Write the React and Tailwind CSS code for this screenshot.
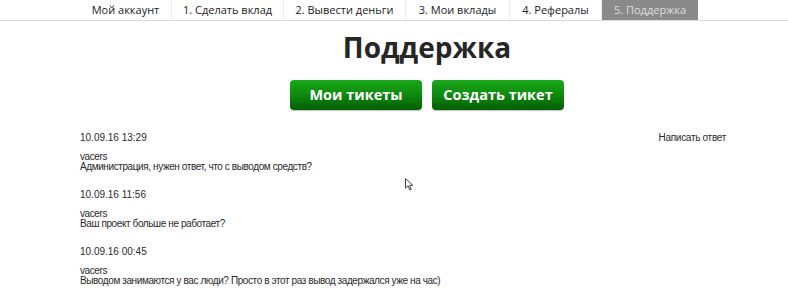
import React from "react";

const tabs = [
  { name: "Мой аккаунт", w: "w-[92px]" },
  { name: "1. Сделать вклад", w: "w-[112px]" },
  { name: "2. Вывести деньги", w: "w-[122px]" },
  { name: "3. Мои вклады", w: "w-[104px]" },
  { name: "4. Рефералы", w: "w-[92px]" },
  { name: "5. Поддержка", w: "w-[96px]", active: true },
];

const messages = [
  { date: "10.09.16 13:29", user: "vacers", text: "Администрация, нужен ответ, что с выводом средств?" },
  { date: "10.09.16 11:56", user: "vacers", text: "Ваш проект больше не работает?" },
  { date: "10.09.16 00:45", user: "vacers", text: "Выводом занимаются у вас люди? Просто в этот раз вывод задержался уже на час)" },
];

export default function App() {
  return (
    <div className="relative w-[788px] h-[294px] bg-white overflow-hidden">
      {/* верхнее меню */}
      <div className="flex pl-[80px] h-[21px] border-b border-[#dcdcdc] font-['Open_Sans',sans-serif] text-[11px]">
        {tabs.map((t, i) => (
          <div
            key={i}
            className={`${t.w} h-[20px] flex items-center justify-center ${
              t.active ? "bg-[#8a8a8a] text-[#dedede]" : "text-[#222] border-r border-[#ececec]"
            }`}
          >
            {t.name}
          </div>
        ))}
      </div>

      <div className="pl-[66px] flex flex-col items-center">
        <h1 className="mt-[8px] text-[28px] leading-[36px] font-bold text-[#262626] font-['Open_Sans',sans-serif]">
          Поддержка
        </h1>
        <div className="mt-[15px] flex gap-[10px]">
          <button className="w-[132px] h-[30px] rounded-[4px] bg-gradient-to-b from-[#1aa81a] via-[#0d8a0d] to-[#045d04] text-white text-[14.5px] font-bold font-['Open_Sans',sans-serif] shadow-[0_1px_1px_rgba(0,0,0,0.25)]">
            Мои тикеты
          </button>
          <button className="w-[132px] h-[30px] rounded-[4px] bg-gradient-to-b from-[#1aa81a] via-[#0d8a0d] to-[#045d04] text-white text-[14.5px] font-bold font-['Open_Sans',sans-serif] shadow-[0_1px_1px_rgba(0,0,0,0.25)]">
            Создать тикет
          </button>
        </div>
      </div>

      {/* сообщения */}
      <div className="mt-[23px] pl-[80px] pr-[62px] font-['Liberation_Sans',sans-serif] text-[10px] leading-[10px] text-[#2a2a2a]">
        {messages.map((m, i) => (
          <div key={i} className="h-[57px]">
            <div className="flex justify-between">
              <span>{m.date}</span>
              {i === 0 && <span className="tracking-[-0.3px]">Написать ответ</span>}
            </div>
            <div className="mt-[9px] tracking-[-0.4px]">{m.user}</div>
            <div className="tracking-[-0.4px]">{m.text}</div>
          </div>
        ))}
      </div>

      {/* курсор */}
      <svg className="absolute left-[405px] top-[178px]" width="9" height="13" viewBox="0 0 9 13">
        <path d="M0.5 0.5 L0.5 10 L3 7.8 L4.8 12 L6.2 11.4 L4.5 7.3 L7.8 7.3 Z" fill="white" stroke="#444" strokeWidth="1" />
      </svg>
    </div>
  );
}
